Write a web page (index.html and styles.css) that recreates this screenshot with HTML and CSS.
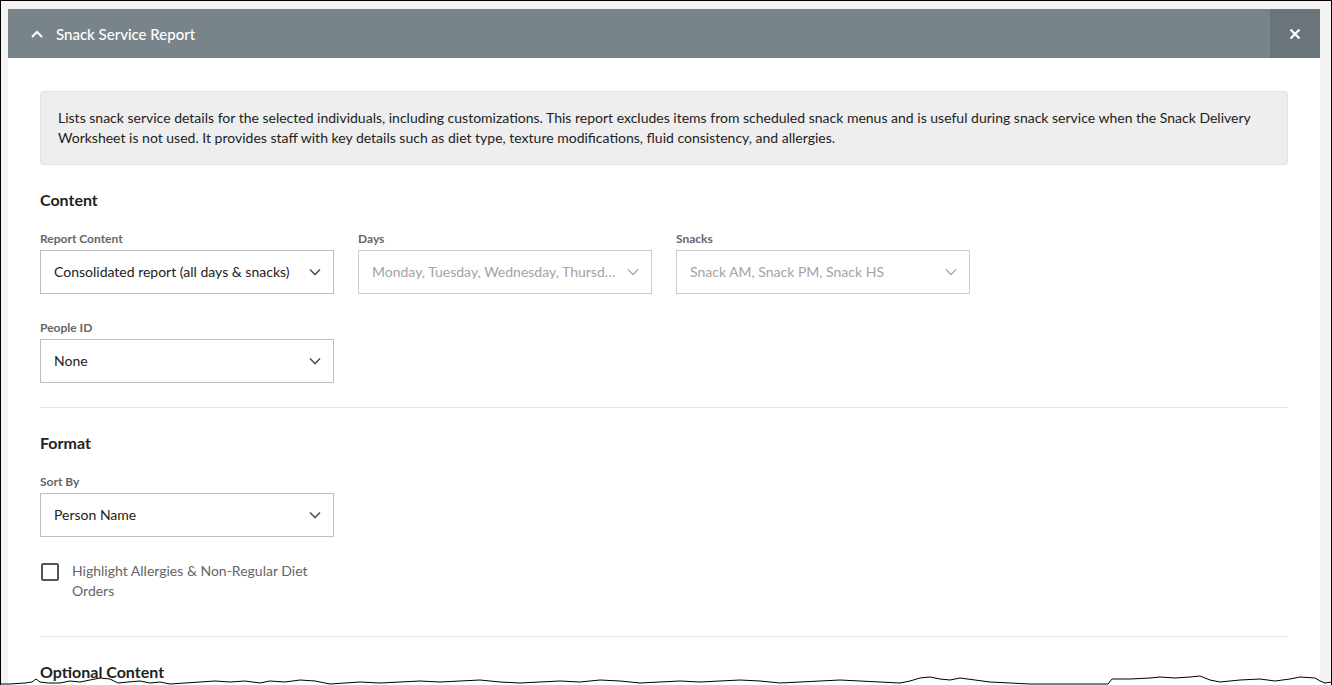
FILE: index.html
```html
<!DOCTYPE html>
<html>
<head lang="en">
    <meta charset="UTF-8">
    <title>Snack Service Report</title>
    <link rel="stylesheet" href="styles.css">
</head>
<body>
<div class="frame">
    <div class="panel">
        <div class="panel-head">
            <svg class="collapse" width="14" height="10" viewBox="0 0 14 10"><path d="M2 8 L7 3 L12 8" fill="none" stroke="#fff" stroke-width="2"/></svg>
            <span class="panel-title">Snack Service Report</span>
            <button class="close-btn" type="button">
                <svg width="12" height="12" viewBox="0 0 12 12"><path d="M1.5 1.5 L10.5 10.5 M10.5 1.5 L1.5 10.5" stroke="#fff" stroke-width="2.2"/></svg>
            </button>
        </div>
        <div class="panel-body">
            <div class="info">
                Lists snack service details for the selected individuals, including customizations. This report excludes items from scheduled snack menus and is useful during snack service when the Snack Delivery Worksheet is not used. It provides staff with key details such as diet type, texture modifications, fluid consistency, and allergies.
            </div>

            <h3 class="section-title">Content</h3>
            <div class="field-row">
                <div class="field">
                    <div class="field-label">Report Content</div>
                    <div class="select">
                        <span>Consolidated report (all days &amp; snacks)</span>
                        <svg class="chev" width="12" height="8" viewBox="0 0 12 8"><path d="M1 1.5 L6 6.5 L11 1.5" fill="none" stroke="currentColor" stroke-width="1.6"/></svg>
                    </div>
                </div>
                <div class="field">
                    <div class="field-label">Days</div>
                    <div class="select disabled">
                        <span>Monday, Tuesday, Wednesday, Thursday, Friday</span>
                        <svg class="chev" width="12" height="8" viewBox="0 0 12 8"><path d="M1 1.5 L6 6.5 L11 1.5" fill="none" stroke="currentColor" stroke-width="1.3"/></svg>
                    </div>
                </div>
                <div class="field">
                    <div class="field-label">Snacks</div>
                    <div class="select disabled">
                        <span>Snack AM, Snack PM, Snack HS</span>
                        <svg class="chev" width="12" height="8" viewBox="0 0 12 8"><path d="M1 1.5 L6 6.5 L11 1.5" fill="none" stroke="currentColor" stroke-width="1.3"/></svg>
                    </div>
                </div>
            </div>
            <div class="field-row">
                <div class="field">
                    <div class="field-label">People ID</div>
                    <div class="select">
                        <span>None</span>
                        <svg class="chev" width="12" height="8" viewBox="0 0 12 8"><path d="M1 1.5 L6 6.5 L11 1.5" fill="none" stroke="currentColor" stroke-width="1.6"/></svg>
                    </div>
                </div>
            </div>

            <hr class="divider">

            <h3 class="section-title">Format</h3>
            <div class="field-row">
                <div class="field">
                    <div class="field-label">Sort By</div>
                    <div class="select">
                        <span>Person Name</span>
                        <svg class="chev" width="12" height="8" viewBox="0 0 12 8"><path d="M1 1.5 L6 6.5 L11 1.5" fill="none" stroke="currentColor" stroke-width="1.6"/></svg>
                    </div>
                </div>
            </div>
            <label class="check">
                <span class="box"></span>
                <span class="check-text">Highlight Allergies &amp; Non-Regular Diet Orders</span>
            </label>

            <hr class="divider divider-low">

            <h3 class="section-title">Optional Content</h3>
        </div>
    </div>

    <svg class="tear" width="1332" height="20" viewBox="0 0 1332 20" preserveAspectRatio="none">
        <polygon fill="#fff" points="0,19 10,19 25,18 32,17 36,14 40,17 48,18 60,18 70,16 80,17 90,15 100,13 110,14 118,18 128,17 140,16 150,18 160,17 170,19 185,18 200,17 215,16 230,17 245,16 260,18 270,16 285,17 300,15 315,16 330,19 345,18 360,17 380,18 400,17 420,16 440,17 460,16 480,15 500,17 520,18 540,17 560,16 580,17 600,15 620,16 640,18 660,17 680,16 700,17 720,16 740,15 760,16 780,18 800,17 820,16 840,15 860,16 880,17 900,18 910,16 920,13 930,12 940,14 950,15 960,13 975,15 990,17 1010,18 1030,19 1050,19 1070,19 1090,19 1108,19 1112,14 1130,14 1150,13 1160,12 1175,13 1190,12 1200,11 1210,15 1220,17 1240,15 1260,14 1275,16 1290,14 1300,12 1315,13 1320,16 1325,18 1332,17 1332,20 0,20"/>
        <polyline fill="none" stroke="#000" stroke-width="1" points="0,19 10,19 25,18 32,17 36,14 40,17 48,18 60,18 70,16 80,17 90,15 100,13 110,14 118,18 128,17 140,16 150,18 160,17 170,19 185,18 200,17 215,16 230,17 245,16 260,18 270,16 285,17 300,15 315,16 330,19 345,18 360,17 380,18 400,17 420,16 440,17 460,16 480,15 500,17 520,18 540,17 560,16 580,17 600,15 620,16 640,18 660,17 680,16 700,17 720,16 740,15 760,16 780,18 800,17 820,16 840,15 860,16 880,17 900,18 910,16 920,13 930,12 940,14 950,15 960,13 975,15 990,17 1010,18 1030,19 1050,19 1070,19 1090,19 1108,19 1112,14 1130,14 1150,13 1160,12 1175,13 1190,12 1200,11 1210,15 1220,17 1240,15 1260,14 1275,16 1290,14 1300,12 1315,13 1320,16 1325,18 1332,17"/>
    </svg>
</div>
</body>
</html>
```

FILE: styles.css
```css
*{
    margin:0;
    padding:0;
    box-sizing:border-box;
}
body{
    background:#fff;
    font-family:Lato, "Open Sans", "Liberation Sans", sans-serif;
    color:#222;
}
.frame{
    position:relative;
    width:1332px;
    height:685px;
    overflow:hidden;
    border:1px solid #000;
    border-bottom:none;
    background:#f3f3f3;
    padding:8px 11px 0 7px;
}
.panel{
    background:#fff;
    height:100%;
}
.panel-head{
    display:flex;
    align-items:center;
    height:49px;
    background:#79848a;
    color:#fff;
}
.collapse{
    margin:0 12px 0 22px;
}
.panel-title{
    flex:1;
    font-size:15px;
    font-weight:500;
}
.close-btn{
    width:50px;
    height:49px;
    border:none;
    background:#6a747b;
    display:flex;
    align-items:center;
    justify-content:center;
    cursor:pointer;
}
.panel-body{
    padding:33px 32px 0 32px;
}
.info{
    background:#eee;
    border:1px solid #e2e2e2;
    border-radius:4px;
    padding:16px 17px;
    font-size:14px;
    line-height:20px;
    color:#222;
}
.section-title{
    font-size:16px;
    line-height:20px;
    font-weight:700;
    color:#222;
    margin:25px 0 21px;
}
.field-row{
    display:flex;
    gap:24px;
    margin-bottom:26px;
}
.field{
    width:294px;
}
.field-label{
    font-size:12px;
    line-height:16px;
    font-weight:700;
    color:#666;
    margin-bottom:3px;
}
.select{
    display:flex;
    align-items:center;
    height:44px;
    border:1px solid #bdbdbd;
    padding:0 12px 1px 13px;
    font-size:14px;
    color:#222;
    gap:5px;
}
.select span{
    flex:1;
    white-space:nowrap;
    overflow:hidden;
    text-overflow:ellipsis;
}
.chev{
    color:#555;
    flex:none;
    margin-top:1px;
}
.select.disabled{
    border-color:#ccc;
    color:#a3a3a3;
}
.select.disabled .chev{
    color:#aaa;
}
.divider{
    border:none;
    border-top:1px solid #e3e3e3;
    margin-top:-2px;
}
.check{
    display:flex;
    align-items:flex-start;
    width:294px;
    margin-top:-2px;
}
.box{
    flex:none;
    width:18px;
    height:18px;
    border:2px solid #555;
    border-radius:2px;
    margin:2px 13px 0 1px;
}
.check-text{
    font-size:14px;
    line-height:20px;
    color:#666;
}
.divider-low{
    margin-top:35px;
}
.tear{
    position:absolute;
    left:-1px;
    bottom:0;
}
```
